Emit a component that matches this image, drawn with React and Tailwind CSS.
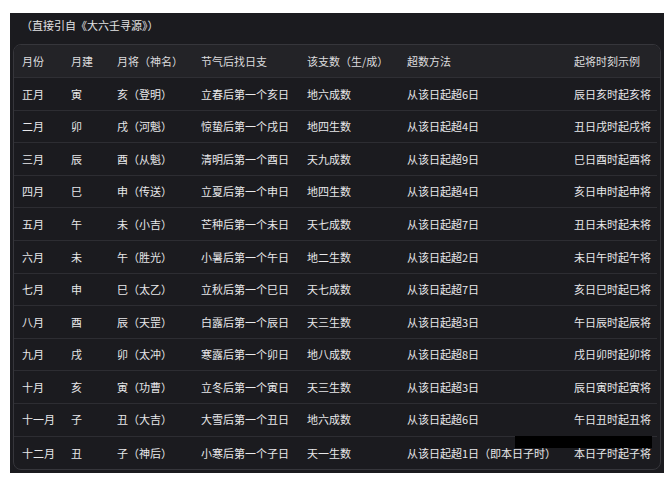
import React from "react";

const rows = [
  ["正月", "寅", "亥（登明）", "立春后第一个亥日", "地六成数", "从该日起超6日", "辰日亥时起亥将"],
  ["二月", "卯", "戌（河魁）", "惊蛰后第一个戌日", "地四生数", "从该日起超4日", "丑日戌时起戌将"],
  ["三月", "辰", "酉（从魁）", "清明后第一个酉日", "天九成数", "从该日起超9日", "巳日酉时起酉将"],
  ["四月", "巳", "申（传送）", "立夏后第一个申日", "地四生数", "从该日起超4日", "亥日申时起申将"],
  ["五月", "午", "未（小吉）", "芒种后第一个未日", "天七成数", "从该日起超7日", "丑日未时起未将"],
  ["六月", "未", "午（胜光）", "小暑后第一个午日", "地二生数", "从该日起超2日", "未日午时起午将"],
  ["七月", "申", "巳（太乙）", "立秋后第一个巳日", "天七成数", "从该日起超7日", "亥日巳时起巳将"],
  ["八月", "酉", "辰（天罡）", "白露后第一个辰日", "天三生数", "从该日起超3日", "午日辰时起辰将"],
  ["九月", "戌", "卯（太冲）", "寒露后第一个卯日", "地八成数", "从该日起超8日", "戌日卯时起卯将"],
  ["十月", "亥", "寅（功曹）", "立冬后第一个寅日", "天三生数", "从该日起超3日", "辰日寅时起寅将"],
  ["十一月", "子", "丑（大吉）", "大雪后第一个丑日", "地六成数", "从该日起超6日", "午日丑时起丑将"],
  ["十二月", "丑", "子（神后）", "小寒后第一个子日", "天一生数", "从该日起超1日（即本日子时）", "本日子时起子将"],
];

const head = ["月份", "月建", "月将（神名）", "节气后找日支", "该支数（生/成）", "超数方法", "起将时刻示例"];

const cols = "grid grid-cols-[49px_46px_84px_106px_100px_167px_1fr]";

const App = () => {
  return (
    <div className="w-[671px] h-[488px] bg-white pt-[13px] pl-[10px] font-['Noto_Sans_CJK_SC',sans-serif]">
      <div className="relative w-[654px] h-[460px] bg-[#1b1b1f] pt-[4px] px-[3px]">
        <p className="pl-[8px] h-[27px] text-[11px] leading-[17px] text-[#e4e4e6]">
          （直接引自《大六壬寻源》）
        </p>
        <div className="border border-[#36363b] rounded-[8px] overflow-hidden bg-[#1b1b1f] h-[426px]">
          <div className={`${cols} h-[33px] items-center bg-[#232327] border-b border-[#2f2f34] text-[11px] text-[#dcdcde]`}>
            {head.map((h) => (
              <div key={h} className="pl-[8px] whitespace-nowrap">{h}</div>
            ))}
          </div>
          {rows.map((r, i) => (
            <div
              key={i}
              className={`${cols} h-[32.6px] items-center mx-[3px] -ml-0 text-[11px] text-[#e8e8ea] ${i < rows.length - 1 ? "border-b border-[#2d2d32]" : ""}`}
            >
              {r.map((c, j) => (
                <div key={j} className="pl-[8px] whitespace-nowrap">{c}</div>
              ))}
            </div>
          ))}
        </div>
        <div className="absolute left-[505px] top-[423px] w-[137px] h-[12px] bg-black" />
      </div>
    </div>
  );
};

export default App;
